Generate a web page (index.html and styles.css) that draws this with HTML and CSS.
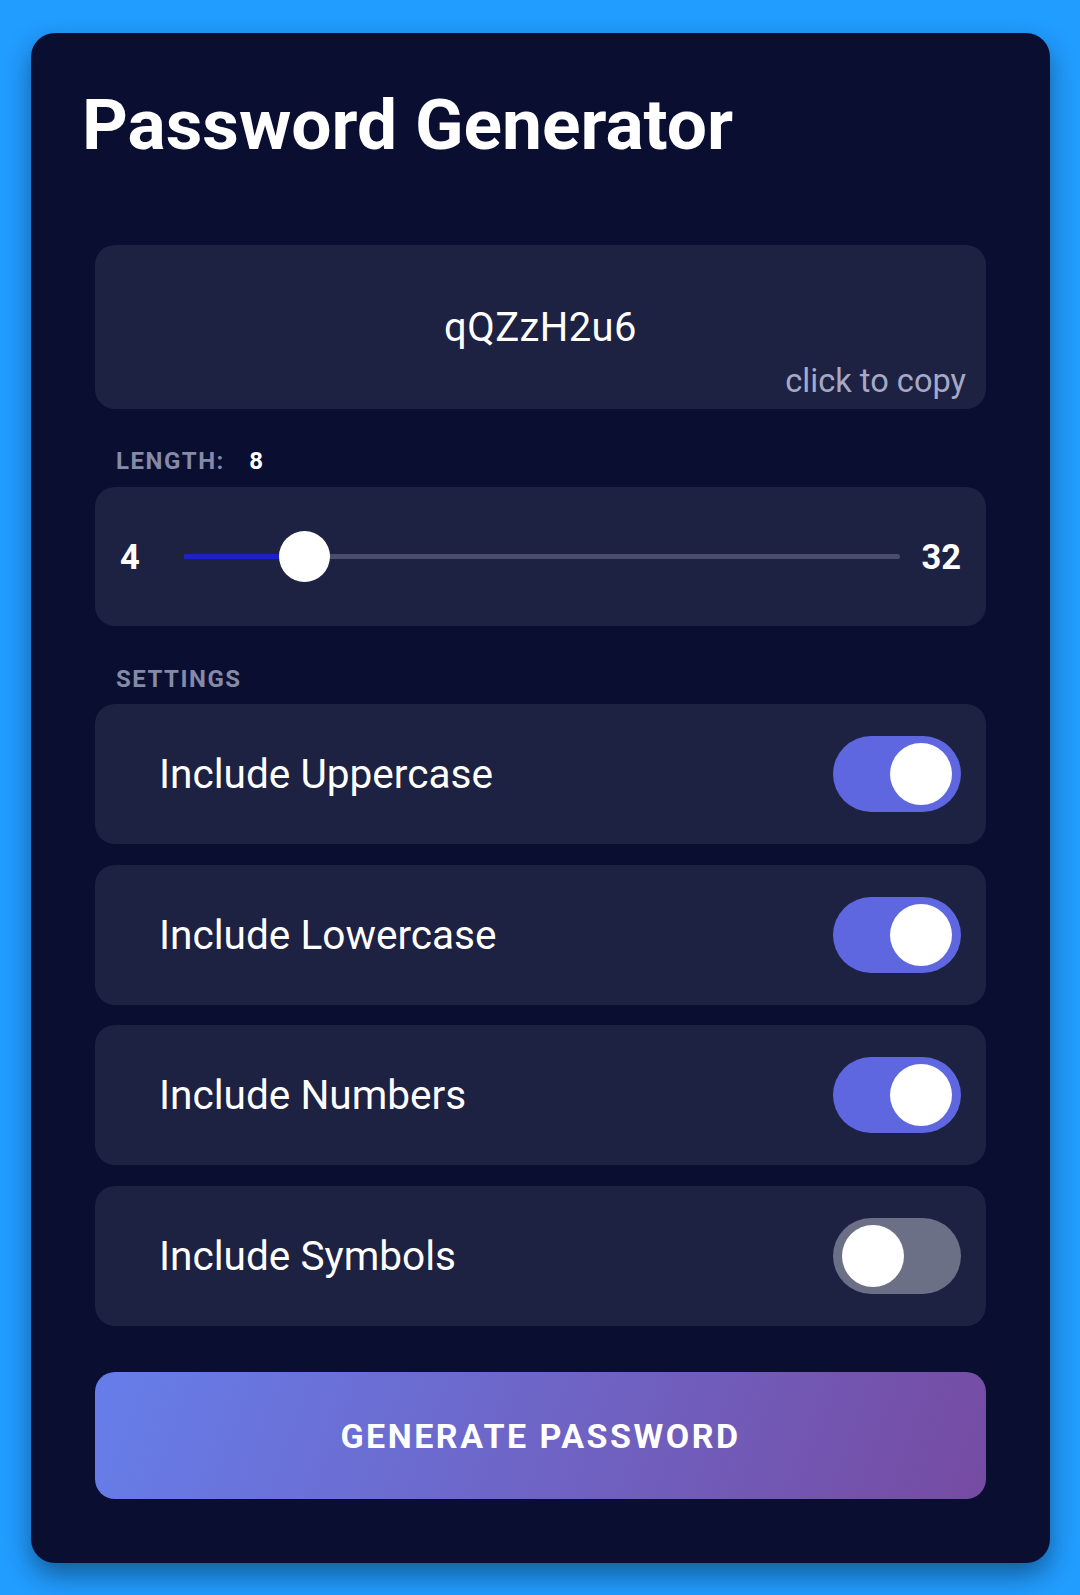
FILE: index.html
```html
<!DOCTYPE html>
<html lang="en">
<head>
<meta charset="utf-8">
<title>Password Generator</title>
<link rel="stylesheet" href="styles.css">
</head>
<body>
<main class="card">
  <h1 class="title">Password Generator</h1>
  <div class="content">
    <div class="result">
      <div class="password">qQZzH2u6</div>
      <div class="copy-hint">click to copy</div>
    </div>

    <div class="section-label">LENGTH: <span class="length-value">8</span></div>
    <div class="slider-box">
      <span class="range-num range-min">4</span>
      <div class="track">
        <div class="track-fill" style="width: 96px"></div>
        <div class="thumb" style="left: 95px"></div>
      </div>
      <span class="range-num range-max">32</span>
    </div>

    <div class="section-label settings-label">SETTINGS</div>
    <div class="settings">
      <div class="setting">
        <span class="setting-name">Include Uppercase</span>
        <span class="toggle on"><span class="knob"></span></span>
      </div>
      <div class="setting">
        <span class="setting-name">Include Lowercase</span>
        <span class="toggle on"><span class="knob"></span></span>
      </div>
      <div class="setting">
        <span class="setting-name">Include Numbers</span>
        <span class="toggle on"><span class="knob"></span></span>
      </div>
      <div class="setting">
        <span class="setting-name">Include Symbols</span>
        <span class="toggle"><span class="knob"></span></span>
      </div>
    </div>

    <button class="generate">GENERATE PASSWORD</button>
  </div>
</main>
</body>
</html>
```

FILE: styles.css
```css
* { box-sizing: border-box; }

html, body {
  margin: 0;
  padding: 0;
}

body {
  background: #219cff;
  font-family: Roboto, "Noto Sans", "Liberation Sans", sans-serif;
  color: #ffffff;
  min-height: 1595px;
  padding: 33px 30px 32px 31px;
}

.card {
  background: #0a0f32;
  border-radius: 24px;
  padding: 56px 48px 64px 48px;
  box-shadow: 0 12px 26px rgba(0, 0, 0, 0.4);
}

.title {
  margin: 0;
  padding-left: 3px;
  font-size: 71.3px;
  line-height: 72px;
  font-weight: 700;
  color: #ffffff;
}

.content {
  padding: 0 16px;
  margin-top: 84px;
}

.result {
  background: #1d2142;
  border-radius: 20px;
  padding: 63px 20px 10px 20px;
  text-align: center;
}

.password {
  font-size: 40px;
  line-height: 40px;
  letter-spacing: 0.4px;
  color: #ffffff;
}

.copy-hint {
  margin-top: 15px;
  font-size: 32.6px;
  line-height: 36px;
  color: #a6a9c6;
  text-align: right;
}

.section-label {
  margin-top: 38px;
  padding-left: 21px;
  font-size: 24px;
  line-height: 28px;
  font-weight: 700;
  letter-spacing: 1.5px;
  color: #858aa6;
}

.length-value {
  color: #ffffff;
  margin-left: 17px;
}

.slider-box {
  margin-top: 12px;
  height: 139px;
  background: #1d2142;
  border-radius: 20px;
  display: flex;
  align-items: center;
  padding: 0 25px 0 25px;
}

.range-num {
  font-size: 34.5px;
  font-weight: 700;
  color: #ffffff;
  line-height: 40px;
}

.track {
  position: relative;
  flex: 1;
  height: 5px;
  margin: 0 21px 0 44px;
  background: #4a4e6c;
  border-radius: 3px;
}

.track-fill {
  height: 100%;
  background: #1a22c8;
  border-radius: 3px;
}

.thumb {
  position: absolute;
  top: 50%;
  width: 51px;
  height: 51px;
  margin-top: -25.5px;
  border-radius: 50%;
  background: #ffffff;
}

.settings-label {
  margin-top: 39px;
}

.settings {
  margin-top: 11px;
  display: flex;
  flex-direction: column;
  gap: 20.5px;
}

.setting {
  height: 140px;
  background: #1d2142;
  border-radius: 20px;
  display: flex;
  align-items: center;
  justify-content: space-between;
  padding: 0 25px 0 64px;
}

.setting-name {
  font-size: 40.6px;
  line-height: 48px;
  color: #ffffff;
}

.toggle {
  position: relative;
  width: 128px;
  height: 76px;
  border-radius: 38px;
  background: #6b7086;
  display: flex;
  align-items: center;
  padding: 0 9px;
}

.toggle.on {
  background: #5e67e0;
  justify-content: flex-end;
}

.knob {
  width: 62px;
  height: 62px;
  border-radius: 50%;
  background: #ffffff;
}

.generate {
  display: block;
  width: 100%;
  height: 127px;
  margin-top: 46.5px;
  border: none;
  border-radius: 20px;
  background: linear-gradient(110deg, #667eea 0%, #764ba2 100%);
  color: #ffffff;
  font-family: Roboto, "Noto Sans", "Liberation Sans", sans-serif;
  font-size: 34px;
  font-weight: 700;
  letter-spacing: 2.5px;
  line-height: 40px;
  padding: 0;
}
```
